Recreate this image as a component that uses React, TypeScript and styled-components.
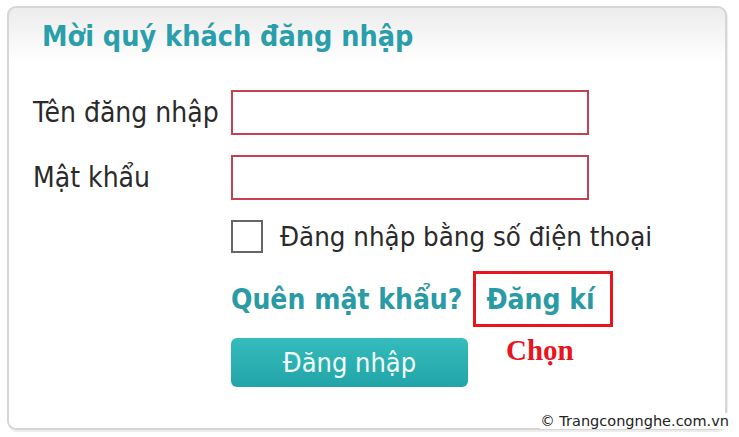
import React, {FC} from 'react';
import styled, {createGlobalStyle} from 'styled-components';

const GlobalStyle = createGlobalStyle`
  html, body {
    margin: 0;
    padding: 0;
    background: #ffffff;
  }
  body {
    font-family: 'DejaVu Sans Condensed', 'Liberation Sans', sans-serif;
  }
`;

const Page = styled.div`
  position: relative;
  width: 739px;
  height: 437px;
  padding: 6px 0 0 7px;
  box-sizing: border-box;
  overflow: hidden;
`;

const Panel = styled.div`
  width: 720px;
  height: 424px;
  box-sizing: border-box;
  border: 2px solid #d6d6d6;
  border-radius: 9px;
  background: linear-gradient(#ececec 0, #ffffff 55px);
  box-shadow: 1px 2px 1px rgba(0, 0, 0, 0.08);
  padding: 10px 24px 0 24px;
  display: flex;
  flex-direction: column;
`;

const Title = styled.h1`
  margin: 0 0 0 9px;
  font-size: 28.5px;
  font-weight: bold;
  color: #2a9eaa;
  line-height: 38px;
`;

const Form = styled.div`
  margin-top: 34px;
  display: grid;
  grid-template-columns: 198px 1fr;
  row-gap: 20px;
  align-items: center;
`;

const Label = styled.label`
  font-size: 28px;
  color: #2a2a2a;
`;

const Input = styled.input`
  box-sizing: border-box;
  width: 358px;
  height: 45px;
  border: 2px solid #c4414f;
  background: #ffffff;
  outline: none;
`;

const Cell = styled.div<{ $top?: number }>`
  grid-column: 2;
  display: flex;
  align-items: center;
  margin-top: ${p => p.$top ?? 0}px;
`;

const Check = styled.span`
  box-sizing: border-box;
  width: 32px;
  height: 33px;
  border: 2px solid #666;
  background: #fff;
`;

const CheckText = styled.span`
  margin-left: 17px;
  font-size: 27.4px;
  line-height: 33px;
  color: #2a2a2a;
  white-space: nowrap;
`;

const Link = styled.a`
  font-size: 28px;
  font-weight: bold;
  color: #2a9aa4;
  text-decoration: none;
  white-space: nowrap;
`;

const Marked = styled.span`
  margin-left: 11px;
  box-sizing: border-box;
  height: 56px;
  padding: 0 15px 0 10px;
  border: 3px solid #e8141e;
  display: flex;
  align-items: center;
`;

const Button = styled.button`
  box-sizing: border-box;
  width: 237px;
  height: 49px;
  border: none;
  border-radius: 6px;
  background: linear-gradient(#35bcbc, #22a4a8);
  color: #f4ffff;
  font-family: inherit;
  font-size: 27px;
  padding: 0;
  cursor: pointer;
`;

const Note = styled.span`
  margin: -4px 0 0 38px;
  align-self: flex-start;
  font-family: 'Liberation Serif', serif;
  font-weight: bold;
  font-size: 29px;
  color: #e8141e;
  line-height: 32px;
`;

const Watermark = styled.div`
  position: absolute;
  right: 10px;
  bottom: 8px;
  font-family: 'DejaVu Sans', sans-serif;
  font-size: 14.5px;
  color: #222;
  background: #fff;
`;

const App: FC = () => (
  <Page>
    <GlobalStyle/>
    <Panel>
      <Title>Mời quý khách đăng nhập</Title>
      <Form>
        <Label>Tên đăng nhập</Label>
        <Input type="text"/>
        <Label>Mật khẩu</Label>
        <Input type="password"/>
        <Cell>
          <Check/>
          <CheckText>Đăng nhập bằng số điện thoại</CheckText>
        </Cell>
        <Cell $top={-2}>
          <Link href="#">Quên mật khẩu?</Link>
          <Marked><Link href="#">Đăng kí</Link></Marked>
        </Cell>
        <Cell $top={-9}>
          <Button>Đăng nhập</Button>
          <Note>Chọn</Note>
        </Cell>
      </Form>
    </Panel>
    <Watermark>© Trangcongnghe.com.vn</Watermark>
  </Page>
);

export default App;
